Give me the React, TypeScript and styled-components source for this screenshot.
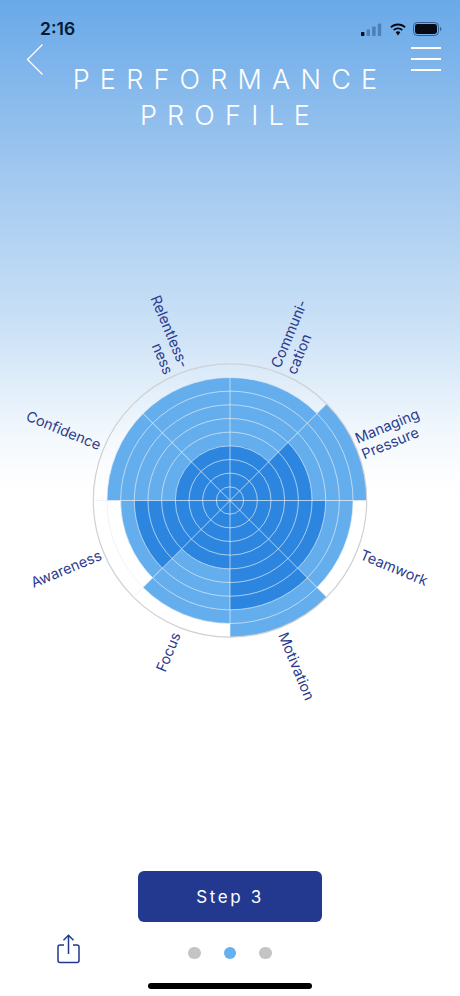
import React from "react";
import styled, { createGlobalStyle } from "styled-components";

const Global = createGlobalStyle`
  html, body { margin: 0; padding: 0; background: #fff; }
  body { font-family: Inter, "Liberation Sans", sans-serif; }
`;

const Page = styled.div`
  width: 460px;
  height: 996px;
  overflow: hidden;
  display: flex;
  flex-direction: column;
  background: linear-gradient(180deg, #69a9e8 0px, #a3c9f0 180px, #c9e0f6 320px, #f4f9fd 440px, #ffffff 490px);
`;

const StatusBar = styled.div`
  height: 44px;
  flex: none;
  padding: 14px 18px 0 40px;
  display: flex;
  align-items: center;
  justify-content: space-between;
  box-sizing: border-box;
`;

const Clock = styled.span`
  font-size: 17.5px;
  font-weight: 600;
  color: #071a30;
  line-height: 1;
`;

const StatusIcons = styled.div`
  display: flex;
  align-items: center;
  gap: 6.5px;
`;

const Header = styled.header`
  flex: none;
  height: 90px;
  display: grid;
  grid-template-columns: 16px 1fr 30px;
  padding: 0 19px 0 26px;
  box-sizing: border-box;
`;

const Title = styled.h1`
  margin: 18px 0 0;
  padding-left: 7px;
  text-align: center;
  font-size: 27px;
  line-height: 36px;
  font-weight: 300;
  letter-spacing: 10.2px;
  color: #fff;
`;

const IconButton = styled.div`
  display: block;
  height: 30px;
`;

const Wheel = styled.svg`
  display: block;
  flex: none;
  margin-top: 146px;
`;

const Label = styled.text`
  font-family: Inter, "Liberation Sans", sans-serif;
  font-size: 14.5px;
  font-weight: 400;
  fill: #2c3c8e;
`;

const StepButton = styled.button`
  flex: none;
  align-self: center;
  width: 184px;
  height: 51px;
  margin-top: 151px;
  border: 0;
  border-radius: 6px;
  background: #22398f;
  color: #fff;
  font-family: Inter, "Liberation Sans", sans-serif;
  font-size: 17px;
  font-weight: 400;
  letter-spacing: 2.6px;
`;

const Footer = styled.div`
  flex: none;
  height: 46px;
  margin-top: 8px;
  display: grid;
  grid-template-columns: 57px 22px 1fr;
  align-items: center;
`;

const ShareIcon = styled.svg`
  align-self: start;
  margin-top: 4px;
`;

const Dots = styled.div`
  display: flex;
  justify-content: center;
  gap: 23px;
  padding-right: 79px;
`;

const Dot = styled.span<{ $active?: boolean }>`
  width: 12.5px;
  height: 12.5px;
  border-radius: 50%;
  background: ${(p) => (p.$active ? "#65b0f0" : "#c4c4c4")};
`;

const HomeBar = styled.div`
  flex: none;
  align-self: center;
  width: 164px;
  height: 6px;
  margin-top: 7px;
  border-radius: 3px;
  background: #000;
`;

const CX = 230;
const CY = 220.5;
const RING = 13.67;

const polar = (r: number, deg: number) => {
  const a = ((deg - 90) * Math.PI) / 180;
  return [CX + r * Math.cos(a), CY + r * Math.sin(a)];
};

const sector = (r: number, from: number) => {
  const [x1, y1] = polar(r, from);
  const [x2, y2] = polar(r, from + 45);
  return `M${CX} ${CY}L${x1} ${y1}A${r} ${r} 0 0 1 ${x2} ${y2}Z`;
};

const sectors = [
  { light: 9, dark: 4 },
  { light: 10, dark: 6 },
  { light: 9, dark: 7 },
  { light: 10, dark: 8 },
  { light: 9, dark: 5 },
  { light: 8, dark: 7 },
  { light: 9, dark: 4 },
  { light: 9, dark: 4 },
];

type L = { x: number; y: number; a: number; end?: boolean; lines: string[] };
const OFFSET = 280;
const labels: L[] = [
  { x: 280, y: 369, a: -67.5, lines: ["Communi-", "cation"] },
  { x: 357.7, y: 443.7, a: -22.5, lines: ["Managing", "Pressure"] },
  { x: 359, y: 558.7, a: 22.5, lines: ["Teamwork"] },
  { x: 278, y: 635, a: 67.5, lines: ["Motivation"] },
  { x: 181, y: 635, a: -67.5, end: true, lines: ["Focus"] },
  { x: 102.7, y: 559.3, a: -22.5, end: true, lines: ["Awareness"] },
  { x: 98.3, y: 450.3, a: 22.5, end: true, lines: ["Confidence"] },
  { x: 179.7, y: 369, a: 67.5, end: true, lines: ["Relentless-", "ness"] },
];

const PerformanceWheel = () => (
  <Wheel width={460} height={440} viewBox="0 0 460 440">
    {sectors.map((s, i) => (
      <path key={`l${i}`} d={sector(s.light * RING, i * 45)} fill="#64aeee" />
    ))}
    {sectors.map((s, i) => (
      <path key={`d${i}`} d={sector(s.dark * RING, i * 45)} fill="#2c86e0" />
    ))}
    {Array.from({ length: 9 }, (_, i) => (
      <circle
        key={i}
        cx={CX}
        cy={CY}
        r={(i + 1) * RING}
        fill="none"
        stroke="#e6edf4"
        strokeOpacity={0.75}
        strokeWidth={0.9}
      />
    ))}
    <circle cx={CX} cy={CY} r={10 * RING} fill="none" stroke="#cfd0d2" strokeWidth={1.2} />
    {Array.from({ length: 8 }, (_, i) => {
      const [x, y] = polar(10 * RING, i * 45);
      return (
        <line
          key={i}
          x1={CX}
          y1={CY}
          x2={x}
          y2={y}
          stroke="#e6edf4"
          strokeOpacity={0.75}
          strokeWidth={0.9}
        />
      );
    })}
    {labels.map((l) => (
      <Label
        key={l.lines[0]}
        transform={`translate(${l.x} ${l.y - OFFSET}) rotate(${l.a})`}
        textAnchor={l.end ? "end" : "start"}
      >
        {l.lines.map((t, i) => (
          <tspan key={t} x={0} dy={i === 0 ? 0 : 17}>
            {t}
          </tspan>
        ))}
      </Label>
    ))}
  </Wheel>
);

export default function App() {
  return (
    <Page>
      <Global />
      <StatusBar>
        <Clock>2:16</Clock>
        <StatusIcons>
          <svg width="21" height="13" viewBox="0 0 21 13">
            <rect x="0" y="9" width="3.4" height="4" rx="0.7" fill="#050a14" />
            <rect x="5.6" y="6.5" width="3.4" height="6.5" rx="0.7" fill="#4b7fb8" />
            <rect x="11.2" y="3.5" width="3.4" height="9.5" rx="0.7" fill="#4b7fb8" />
            <rect x="16.8" y="0.5" width="3.4" height="12.5" rx="0.7" fill="#4b7fb8" />
          </svg>
          <svg width="18" height="13" viewBox="0 0 18 13">
            <path
              d="M9 2.400c2.500 0 4.800 1 6.500 2.600l1.200-1.300C14.700 1.700 12 .6 9 .6S3.300 1.700 1.300 3.700L2.500 5C4.200 3.400 6.500 2.400 9 2.400z"
              fill="#050a14"
            />
            <path
              d="M9 6.300c1.400 0 2.700.5 3.700 1.500l1.200-1.300C12.600 5.200 10.900 4.500 9 4.500s-3.600.7-4.900 2l1.200 1.300c1-1 2.300-1.500 3.700-1.500z"
              fill="#050a14"
            />
            <path d="M9 8.300c-.9 0-1.700.3-2.300.9L9 12.600l2.300-3.400c-.6-.6-1.400-.9-2.300-.9z" fill="#050a14" />
          </svg>
          <svg width="29" height="14" viewBox="0 0 29 14">
            <rect x="0.500" y="0.500" width="25" height="13" rx="3.800" fill="none" stroke="#2f5f96" />
            <rect x="2" y="2" width="22" height="10" rx="2.400" fill="#050a14" />
            <path d="M27 5v4c.8-.3 1.400-1.100 1.400-2s-.6-1.700-1.400-2z" fill="#2f5f96" />
          </svg>
        </StatusIcons>
      </StatusBar>
      <Header>
        <IconButton>
          <svg width="17" height="31" viewBox="0 0 17 31">
            <path d="M16.500 .5L1.500 15.500l15 15" fill="none" stroke="#fff" strokeWidth="1.300" />
          </svg>
        </IconButton>
        <Title>
          PERFORMANCE
          <br />
          PROFILE
        </Title>
        <IconButton>
          <svg width="30" height="27" viewBox="0 0 30 27">
            <path d="M0 4h30M0 15h30M0 26h30" stroke="#fff" strokeWidth="2.200" />
          </svg>
        </IconButton>
      </Header>
      <PerformanceWheel />
      <StepButton>Step 3</StepButton>
      <Footer>
        <span />
        <ShareIcon width="23" height="30" viewBox="0 0 23 30">
          <path
            d="M7 11H3a2 2 0 0 0-2 2V26.500a2 2 0 0 0 2 2h17a2 2 0 0 0 2-2V13a2 2 0 0 0-2-2h-4"
            fill="none"
            stroke="#22398f"
            strokeWidth="1.500"
          />
          <path d="M11.500 20V1.500M6.500 6.200l5-5 5 5" fill="none" stroke="#22398f" strokeWidth="1.500" />
        </ShareIcon>
        <Dots>
          <Dot />
          <Dot $active />
          <Dot />
        </Dots>
      </Footer>
      <HomeBar />
    </Page>
  );
}
